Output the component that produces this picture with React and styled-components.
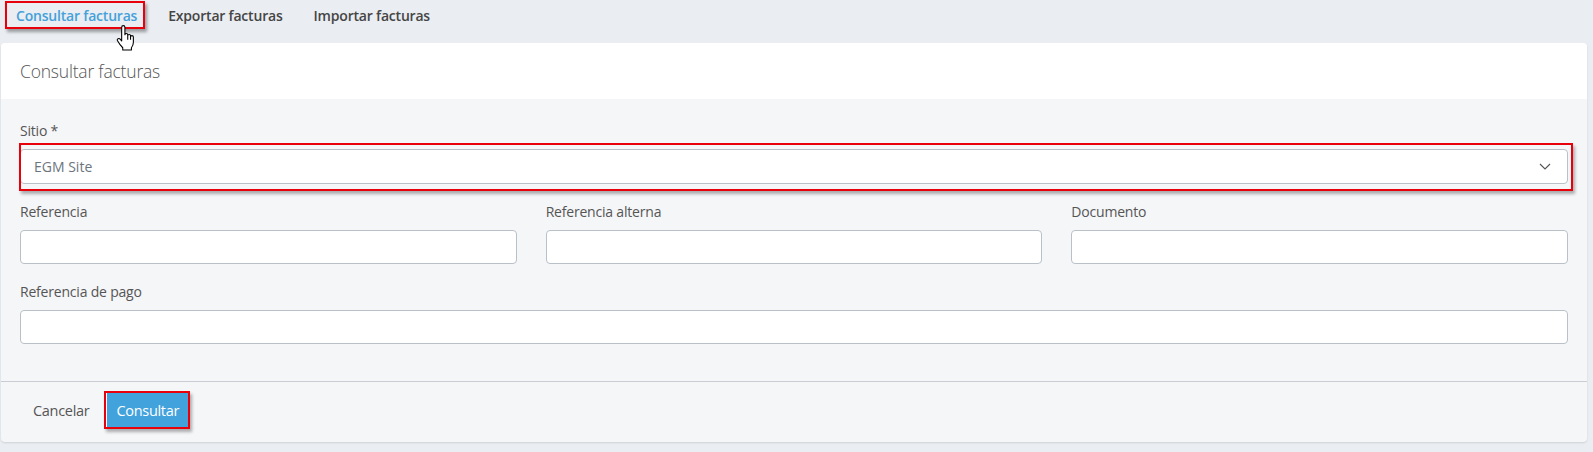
import React from 'react';
import styled, { createGlobalStyle } from 'styled-components';

const GlobalStyle = createGlobalStyle`
  body {
    margin: 0;
    background: #eaedf1;
    font-family: "Open Sans", "Noto Sans", sans-serif;
    color: #555;
  }
`;

const Page = styled.div`
  width: 1593px;
  height: 452px;
  overflow: hidden;
`;

const TabBar = styled.nav`
  display: flex;
  align-items: flex-start;
  gap: 12px;
  height: 43px;
  padding: 1px 0 0 5px;
  box-sizing: border-box;
`;

const Tab = styled.a`
  position: relative;
  display: flex;
  align-items: center;
  height: 24px;
  padding: 0 6px 0 9px;
  border: 2px solid ${p => (p.$marked ? '#e8000b' : 'transparent')};
  box-shadow: ${p => (p.$marked ? '2px 3px 3px rgba(0,0,0,0.35)' : 'none')};
  font-size: 14px;
  font-weight: 600;
  letter-spacing: -0.2px;
  color: ${p => (p.$active ? '#44a1da' : '#454545')};
  cursor: pointer;
`;

const Cursor = styled.svg`
  position: absolute;
  left: 109px;
  top: 22px;
  width: 20px;
  height: 26px;
`;

const Card = styled.section`
  margin: 0 6px 0 1px;
  height: 399px;
  background: #f5f6f8;
  border-radius: 4px;
  box-shadow: 0 1px 2px rgba(0, 0, 0, 0.12);
  display: flex;
  flex-direction: column;
  overflow: hidden;
`;

const CardHeader = styled.header`
  height: 56px;
  background: #fff;
  display: flex;
  align-items: center;
  padding: 0 19px;
  font-size: 17.5px;
  font-weight: 300;
  color: #555;
  letter-spacing: -0.2px;
`;

const CardBody = styled.div`
  padding: 21px 19px 20px 19px;
  border-bottom: 1px solid #c9cdd3;
`;

const Row = styled.div`
  display: grid;
  grid-template-columns: repeat(${p => p.$cols || 1}, 1fr);
  column-gap: 29px;
`;

const Group = styled.div`
  margin-bottom: 17px;
`;

const Label = styled.label`
  display: block;
  font-size: 14px;
  line-height: 22px;
  margin-bottom: 7px;
  color: #555;
  letter-spacing: -0.2px;
`;

const Field = styled.div`
  position: relative;
  height: ${p => p.$h || 34}px;
  box-sizing: border-box;
  background: #fff;
  border: 1px solid #b9c0c8;
  border-radius: 4px;
  display: flex;
  align-items: center;
  justify-content: space-between;
  padding: 0 16px 0 13px;
  font-size: 14px;
  color: #6c757d;
`;

const Marker = styled.span`
  position: absolute;
  top: ${p => p.$t}px;
  right: ${p => p.$r}px;
  bottom: ${p => p.$b}px;
  left: ${p => p.$l}px;
  border: 2px solid #e8000b;
  box-shadow: 2px 3px 3px rgba(0, 0, 0, 0.3);
  pointer-events: none;
`;

const Footer = styled.footer`
  display: flex;
  align-items: center;
  gap: 6px;
  padding: 11px 20px 0 20px;
`;

const LinkButton = styled.button`
  background: none;
  border: none;
  padding: 0 12px;
  height: 34px;
  font-family: inherit;
  font-size: 14.5px;
  color: #555;
  letter-spacing: -0.3px;
`;

const PrimaryButton = styled.button`
  position: relative;
  height: 34px;
  padding: 0 9px;
  background: #42a2dc;
  border: none;
  font-family: inherit;
  font-size: 14.5px;
  color: #fff;
  letter-spacing: -0.3px;
`;

function Chevron() {
  return (
    <svg width="12" height="7" viewBox="0 0 12 7">
      <path d="M1 1l5 5 5-5" fill="none" stroke="#555" strokeWidth="1.1" />
    </svg>
  );
}

function HandCursor() {
  return (
    <Cursor viewBox="0 0 18 24">
      <path
        d="M5 2.2Q5 0.6 6.5 0.6Q8 0.6 8 2.2L8 9Q8 7.8 9.3 7.8Q10.6 7.8 10.6 9L10.6 10Q10.6 8.8 11.9 8.8Q13.2 8.8 13.2 10L13.2 11Q13.2 9.8 14.5 9.8Q15.8 9.8 15.8 11L15.8 16Q15.8 19 14 21L14 23L6 23L6 21Q3 18 1.2 14.6Q0.5 13.2 1.7 12.6Q2.8 12 3.8 13.2L5 14.8Z M10.6 10V13.5 M13.2 11V13.5"
        fill="#fff"
        stroke="#000"
        strokeWidth="1"
        strokeLinejoin="round"
      />
    </Cursor>
  );
}

function Input({ label }) {
  return (
    <Group>
      <Label>{label}</Label>
      <Field />
    </Group>
  );
}

export default function App() {
  return (
    <Page>
      <GlobalStyle />
      <TabBar>
        <Tab $active $marked>
          Consultar facturas
          <HandCursor />
        </Tab>
        <Tab>Exportar facturas</Tab>
        <Tab>Importar facturas</Tab>
      </TabBar>

      <Card>
        <CardHeader>Consultar facturas</CardHeader>
        <CardBody>
          <Group>
            <Label>Sitio *</Label>
            <Field $h={35}>
              EGM Site
              <Chevron />
              <Marker $t={-7} $r={-6} $b={-8} $l={-2} />
            </Field>
          </Group>
          <Row $cols={3}>
            <Input label="Referencia" />
            <Input label="Referencia alterna" />
            <Input label="Documento" />
          </Row>
          <Input label="Referencia de pago" />
        </CardBody>
        <Footer>
          <LinkButton>Cancelar</LinkButton>
          <PrimaryButton>
            Consultar
            <Marker $t={-2} $r={-2} $b={-2} $l={-3} />
          </PrimaryButton>
        </Footer>
      </Card>
    </Page>
  );
}
